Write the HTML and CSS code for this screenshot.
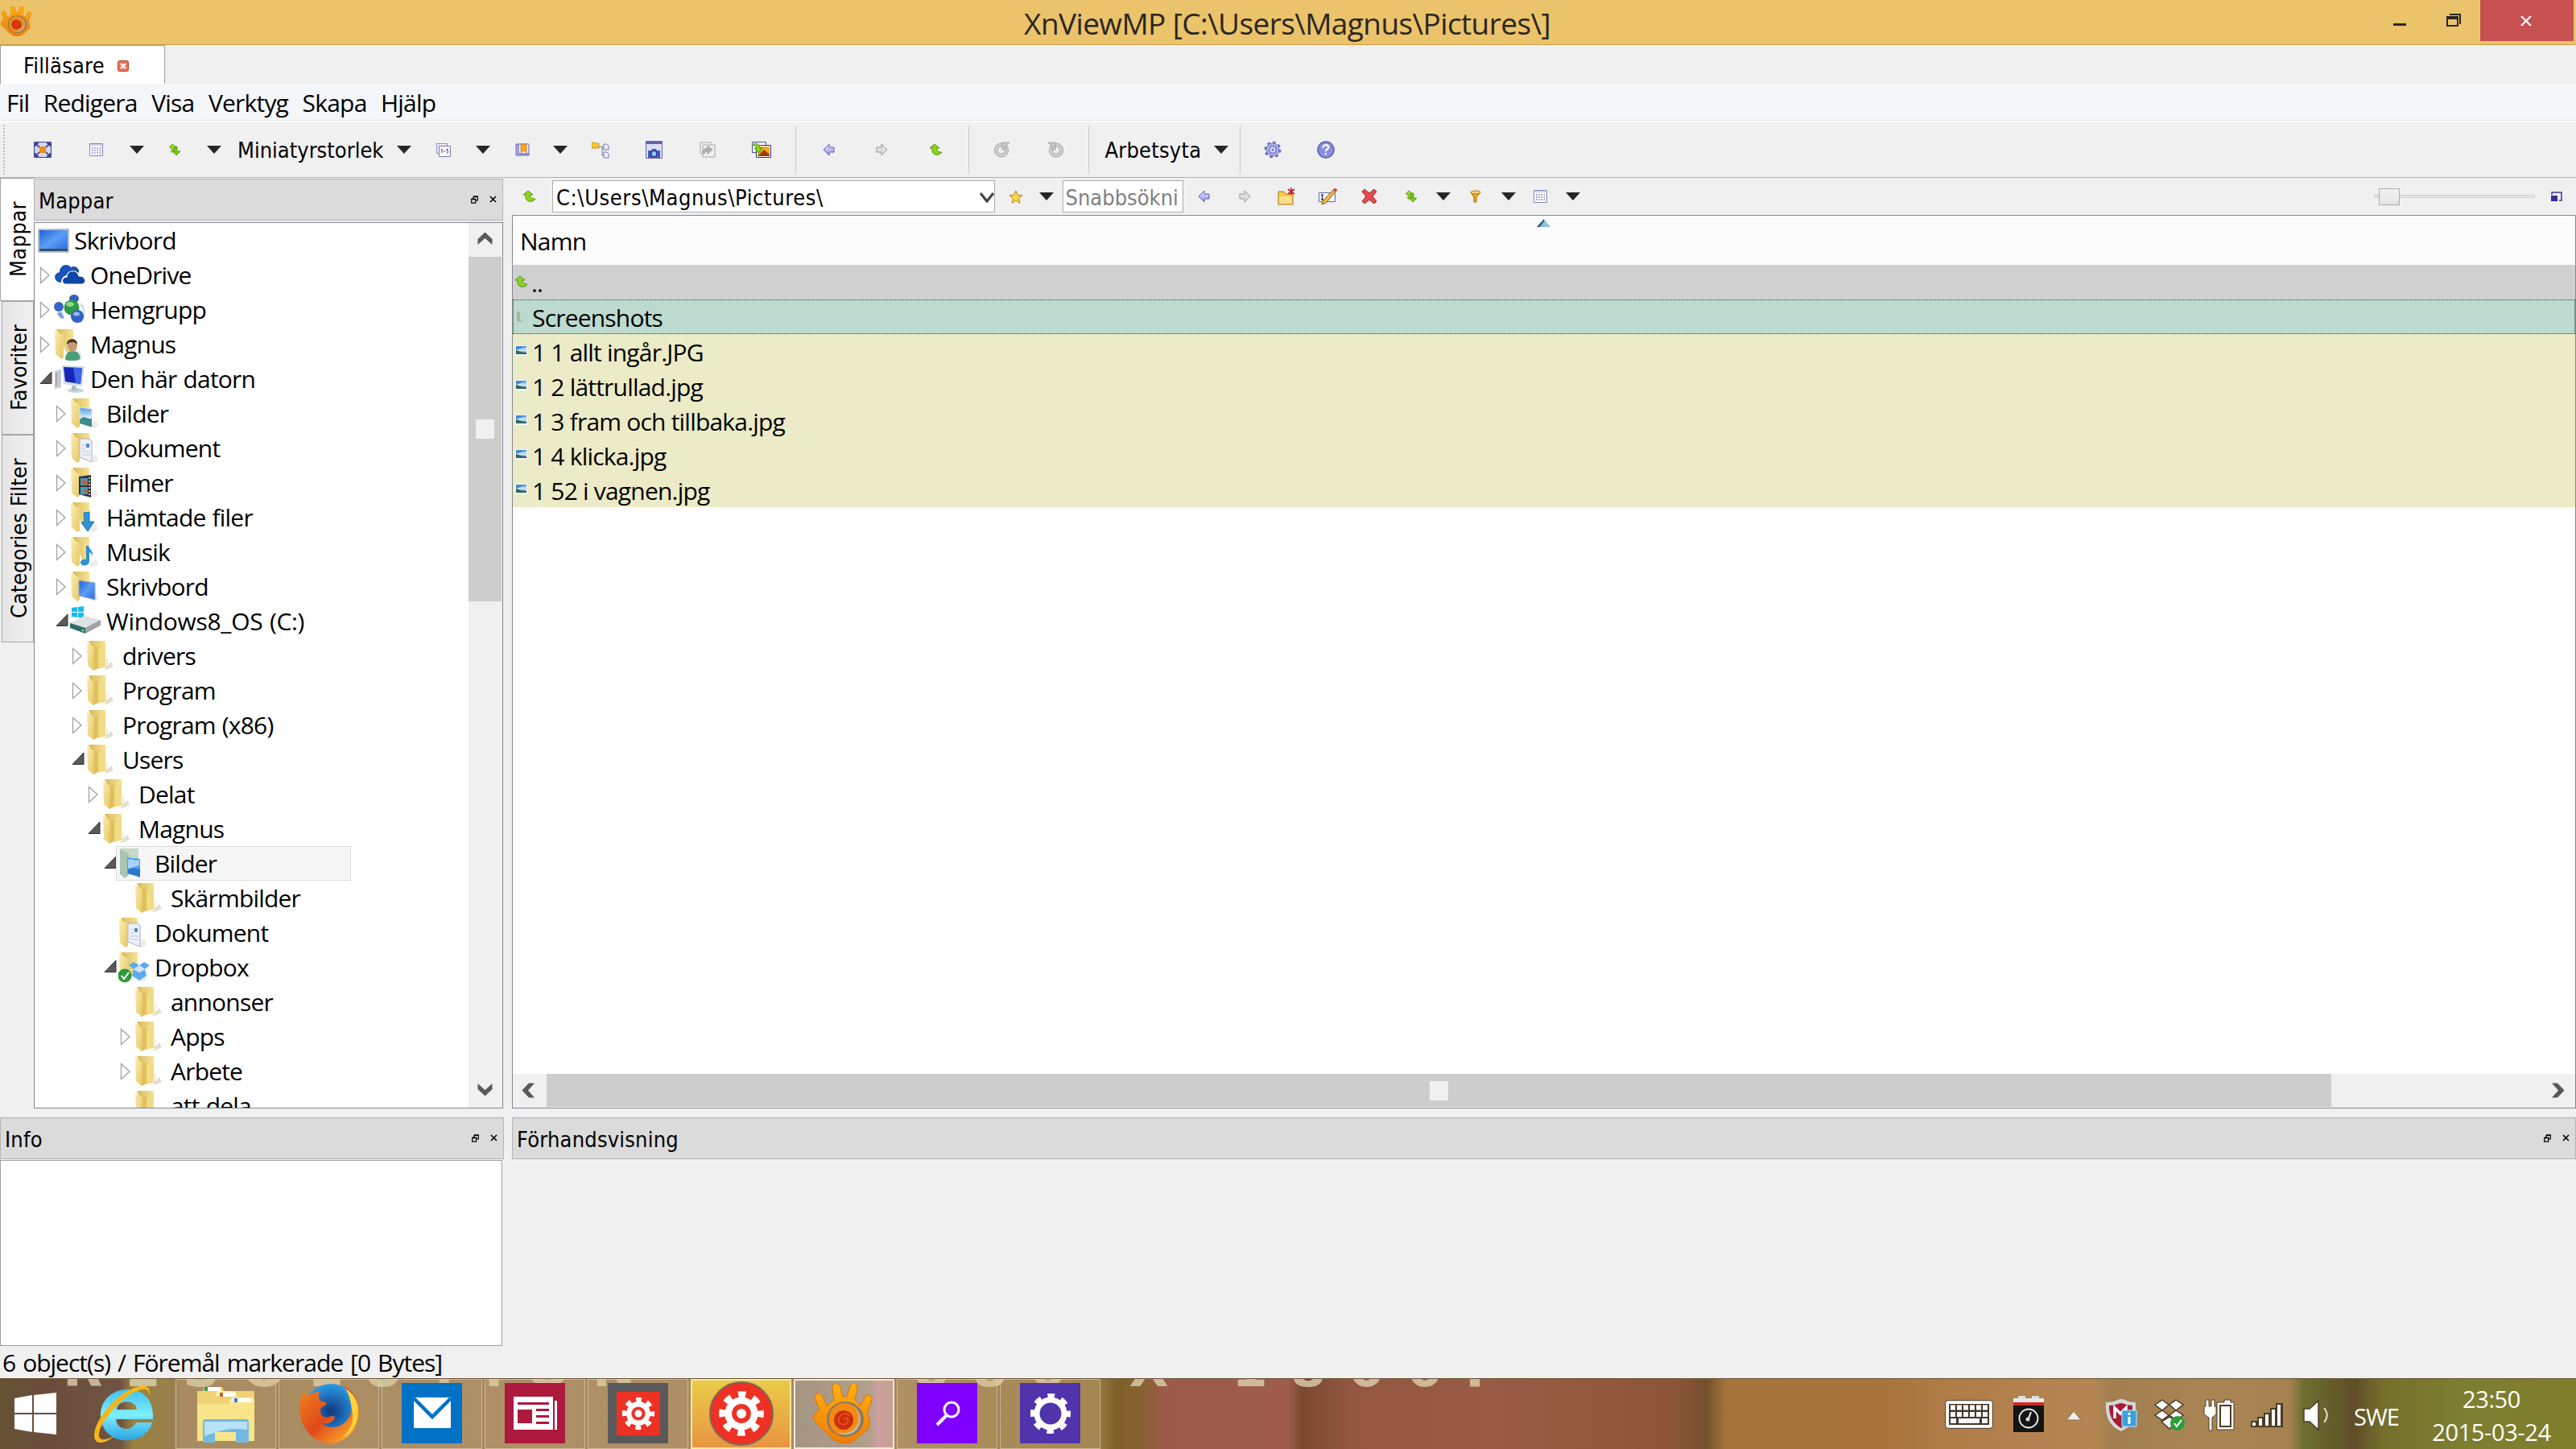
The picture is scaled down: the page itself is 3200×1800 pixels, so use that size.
FILE: index.html
```
<!DOCTYPE html>
<html lang="sv">
<head>
    <meta charset="UTF-8">
    <meta name="viewport" content="width=device-width, initial-scale=1.0">
    <title>XnViewMP</title>
    <link rel="stylesheet" href="styles.css">
</head>
<body>
    <!-- Shared icons -->
    <svg class="sprite" width="0" height="0">
        <defs>
            <linearGradient id="gFolder" x1="0" x2="1" y1="0" y2="1"><stop offset="0" stop-color="#fbeeb0"/><stop offset="1" stop-color="#e6c765"/></linearGradient>
            <linearGradient id="gBack" x1="0" x2="1"><stop offset="0" stop-color="#d8b95c"/><stop offset="1" stop-color="#f7e393"/></linearGradient>
            <linearGradient id="gScreen" x1="0" x2="1" y1="0" y2="1"><stop offset="0" stop-color="#2560d8"/><stop offset=".5" stop-color="#5b9df5"/><stop offset="1" stop-color="#2f6fe0"/></linearGradient>
            <linearGradient id="gBlue" x1="0" x2="0" y1="0" y2="1"><stop offset="0" stop-color="#e4e6ff"/><stop offset="1" stop-color="#9296e0"/></linearGradient>
            <linearGradient id="gSky" x1="0" x2="0" y1="0" y2="1"><stop offset="0" stop-color="#4d9be0"/><stop offset=".5" stop-color="#d5ecf8"/><stop offset="1" stop-color="#3f7d80"/></linearGradient>
            <linearGradient id="gOrange" x1="0" x2="0" y1="0" y2="1"><stop offset="0" stop-color="#ffb010"/><stop offset="1" stop-color="#f07c08"/></linearGradient>
            <linearGradient id="gIe" x1="0" x2="0" y1="0" y2="1"><stop offset="0" stop-color="#3fc0ee"/><stop offset=".5" stop-color="#7fefff"/><stop offset="1" stop-color="#2aa3e0"/></linearGradient>
            <linearGradient id="gFox" x1="0" x2="1" y1="0" y2="1"><stop offset="0" stop-color="#f08a20"/><stop offset=".5" stop-color="#e2481a"/><stop offset="1" stop-color="#ffc830"/></linearGradient>
            <radialGradient id="gGlobe"><stop offset="0" stop-color="#12357e"/><stop offset="1" stop-color="#2b9be6"/></radialGradient>
        </defs>

        <symbol id="i-folder" viewBox="0 0 40 40">
            <path d="M22 37l9-10 3 6-7 3z" fill="#d9d6cc" opacity=".8"/>
            <path d="M3 1h21v26l-8 4z" fill="url(#gBack)"/>
            <path d="M14 12l10-8v20l3-1v10l-13 3z" fill="#f1dc85"/>
            <path d="M1 2l9 8v27l-1 1-7-6z" fill="url(#gFolder)"/>
            <path d="M10 10l5-2v27l-6 3z" fill="#dfc05c"/>
            <path d="M24 23h2.500v9H24z" fill="#fbf6df"/>
        </symbol>
        <symbol id="i-half" viewBox="0 0 40 40">
            <path d="M24 36l8-9 3 8-6 3z" fill="#ddd" opacity=".6"/>
            <path d="M3 1h21v26l-8 4z" fill="url(#gBack)"/>
            <path d="M1 2l11 7v27l-3 2-7-6z" fill="url(#gFolder)"/>
        </symbol>
        <symbol id="i-pictures" viewBox="0 0 40 40">
            <use href="#i-half"/>
            <path d="M12 12l15 2v23l-15-5z" fill="url(#gSky)" stroke="#dfe8ee"/>
            <path d="M12 28c5-8 9 0 15-2v10l-15-4z" fill="#3c8a8f"/>
        </symbol>
        <symbol id="i-pictures-sel" viewBox="0 0 40 40">
            <path d="M3 1h22v26l-8 4z" fill="#c3dac6"/>
            <path d="M2 1l11 7v26l-5 4-6-5z" fill="#a9c5b2"/>
            <path d="M11 12l16 2v23l-16-5z" fill="#4fa0ef"/>
            <path d="M12 15c5-3 9 3 14 0v7l-14 4z" fill="#a8d4fa"/>
            <path d="M12 28c5-6 9 0 15-2v10l-15-4z" fill="#2d78c8"/>
        </symbol>
        <symbol id="i-docs" viewBox="0 0 40 40">
            <use href="#i-half"/>
            <path d="M12 8h12l3 3v26l-15-6z" fill="#eef0f6" stroke="#a9b0c0"/>
            <path d="M15 16h4M15 20h4M15 24h10M15 28h10" stroke="#b8c4d8"/>
            <path d="M20 14h4v5h-4z" fill="#5b8cc6"/>
        </symbol>
        <symbol id="i-film" viewBox="0 0 40 40">
            <use href="#i-half"/>
            <path d="M11 12l15-2v28l-15-4z" fill="#333"/>
            <path d="M13 14h9v9h-9zM13 25h9v9h-9z" fill="#3aa0c8"/>
            <path d="M14 20l4-5 4 6v2zM16 30l4-3 2 6z" fill="#d6502a"/>
            <path d="M24 13v24" stroke="#eee" stroke-width="1.500" stroke-dasharray="2 2"/>
        </symbol>
        <symbol id="i-down" viewBox="0 0 40 40">
            <use href="#i-half"/>
            <path d="M17 14l7-1v12h6l-8 12-8-11 4-1z" fill="#2f95da" stroke="#1d6fb0"/>
        </symbol>
        <symbol id="i-music" viewBox="0 0 40 40">
            <use href="#i-half"/>
            <path d="M20 12h3c0 4 6 5 5 13-1-4-3-4-4-5v11c0 7-11 7-11 2 0-4 4-5 7-4z" fill="#2f8fd2"/>
        </symbol>
        <symbol id="i-deskfold" viewBox="0 0 40 40">
            <use href="#i-half"/>
            <path d="M11 12l20 3v21l-20-5z" fill="url(#gScreen)" stroke="#9aa9bb"/>
        </symbol>
        <symbol id="i-userfold" viewBox="0 0 40 40">
            <use href="#i-half"/>
            <path d="M14 39c0-8 4-11 10-11 5 0 8 3 9 10-6 3-13 3-19 1z" fill="#4aa07a"/>
            <ellipse cx="23" cy="21" rx="6" ry="8" fill="#c79a77"/>
            <path d="M16 20c-1-9 14-9 13 0-3-4-9-4-13 0z" fill="#4b3a2a"/>
        </symbol>
        <symbol id="i-desktop" viewBox="0 0 40 40">
            <path d="M0 5h39v30H0z" fill="#b6c1cc"/>
            <path d="M2 7h35v24H2z" fill="url(#gScreen)"/>
            <path d="M2 30h35v3H2z" fill="#3b4f6b"/>
        </symbol>
        <symbol id="i-cloud" viewBox="0 0 40 40">
            <path d="M9 29c-9 0-11-11-2-13 0-9 10-12 14-6 6-3 11 2 10 7-6-3-10 0-11 3-7-1-11 3-11 9z" fill="#1a52b5"/>
            <path d="M14 31c-5-1-5-9 2-9 0-9 13-10 15-1 8-1 11 9 4 10z" fill="#0c45a8" stroke="#fff" stroke-width="1.200"/>
        </symbol>
        <symbol id="i-homegroup" viewBox="0 0 40 40">
            <path d="M33 12c6 6 5 18 0 24" stroke="#d5e4f4" stroke-width="3" fill="none"/>
            <circle cx="6" cy="16" r="6" fill="#3a62c4"/><path d="M4 24c2 6 6 8 9 6l-4-8z" fill="#7c9de0"/>
            <ellipse cx="25" cy="6" rx="6" ry="5" fill="#3560bf"/>
            <circle cx="22" cy="17" r="9.500" fill="#2f9a46"/><ellipse cx="20" cy="13" rx="5" ry="3" fill="#8fd68f"/>
            <circle cx="29" cy="28" r="8" fill="#3560c4"/><ellipse cx="28" cy="25" rx="4" ry="2.500" fill="#9ab8ee"/>
        </symbol>
        <symbol id="i-computer" viewBox="0 0 40 40">
            <path d="M1 10l8-2v22l-8 2z" fill="#c5cad0"/><path d="M3 12v16" stroke="#888"/>
            <path d="M10 3l28 1-3 25-23-3z" fill="#d4dde6"/>
            <path d="M12 5l23 1-2 20-19-3z" fill="#1526b8"/>
            <path d="M24 6l11 0-2 20-6-1z" fill="#3f63e4"/>
            <ellipse cx="27" cy="34" rx="10" ry="3" fill="#cdd1d6"/><path d="M22 28h5l2 6h-7z" fill="#b5bac0"/>
        </symbol>
        <symbol id="i-drive" viewBox="0 0 40 40">
            <path d="M2 3l7-1v6H2zM10 2l7-1v7h-7zM2 9h7v6l-7-1zM10 9h7v7l-7-1z" fill="#19b9ee"/>
            <path d="M0 22l18-9 20 5-19 10z" fill="#dfe2e4"/>
            <path d="M0 22l19 6v7L0 28z" fill="#2d6a6c"/><path d="M19 28l19-10v7L19 35z" fill="#9da2a6"/>
            <circle cx="16" cy="31" r="1.500" fill="#54f0a0"/>
        </symbol>
        <symbol id="i-dropfold" viewBox="0 0 40 40">
            <use href="#i-half"/>
            <path d="M19 13l7 4-7 5-6-5zM32 13l-6 4 7 5 6-5zM19 22l7 4 7-4 2 8-9 6-9-6z" fill="#5aaaf0"/>
            <path d="M26 17l7 5-7 4-7-4z" fill="#cfe6fb"/>
            <circle cx="8" cy="30" r="8.500" fill="#2c9a38"/><path d="M4 30l3 4 6-8" stroke="#fff" stroke-width="2" fill="none"/>
        </symbol>

        <!-- XnView eye, stretched to the box it is used in -->
        <symbol id="i-eye" viewBox="0 0 78 74" preserveAspectRatio="none">
            <path d="M2 17c0-6 8-7 10-1l5 12c3-3 6-6 9-8L24 5c-1-6 8-7 10-1l3 12h5l4-13c2-6 10-4 9 2l-3 15c3 2 5 4 7 7l5-10c3-6 11-3 9 3l-6 17c4 8 5 14 0 20L52 70c-7 5-19 5-26 0L4 49c-5-7-4-12 4-16z" fill="url(#gOrange)" stroke="#d9720c"/>
            <ellipse cx="40" cy="44" rx="23" ry="22" fill="#8d7a5c"/>
            <ellipse cx="40" cy="44" rx="19" ry="19.500" fill="#c3b79c"/>
            <path d="M20 44c0-24 32-26 36-6 4 18-14 26-24 22 6 8-12 0-12-16z" fill="#f58a12"/>
            <ellipse cx="38" cy="45" rx="12" ry="12" fill="#c8300c"/>
            <path d="M38 45c3-6 8 0 4 4-5 4-12 0-10-6 3-7 10-7 14-3" fill="none" stroke="#ee4a20" stroke-width="2"/>
        </symbol>

        <symbol id="t-full" viewBox="0 0 22 20"><path d="M.5.5h21v19H.5z" fill="#d3d6fb" stroke="#3c3f92"/><path d="M2 2l5 5M20 2l-5 5M2 18l5-5M20 18l-5-5M2 6V2h4M16 2h4v4M2 14v4h4M16 18h4v-4" stroke="#2b2e7c" stroke-width="1.500" fill="none"/><path d="M7 6h8v8H7z" fill="#f0900e"/></symbol>
        <symbol id="t-grid" viewBox="0 0 17 16"><path d="M.5.5h16v15H.5z" fill="#fff" stroke="#8286be"/><path d="M1 1h15v2H1z" fill="#cfd1f2"/><path d="M3 6h11M3 9h11M3 12h11" stroke="#6a6eb4" stroke-width="1.300" stroke-dasharray="1.500 1.700"/></symbol>
        <symbol id="t-sort" viewBox="0 0 16 16"><path d="M1 5l4-4 5 4H7v6H4V5z" fill="#9be01c" stroke="#4a8a08" stroke-width=".8"/><path d="M8 4h3v6h4l-5 5-4-5h2z" fill="#7ccc10" stroke="#4a8a08" stroke-width=".8"/></symbol>
        <symbol id="t-num" viewBox="0 0 18 17"><path d="M.5.5h13v12H.5z" fill="#f6e6e8" stroke="#8c8fd0"/><path d="M3.500 3.500h14v13h-14z" fill="#fff" stroke="#7478c0"/><path d="M6 8l1-1v5M9 10h2M15 7.500h-2v2c3 0 2 3-.5 2.500" stroke="#33378c" fill="none"/></symbol>
        <symbol id="t-book" viewBox="0 0 18 16"><path d="M1 1h3v12h13v2H1z" fill="#b8bbf0" stroke="#6468b8"/><path d="M4 1h13v12H4z" fill="#eef" stroke="#6468b8"/><path d="M7 1h7v11l-3-3-4 3z" fill="#f8a81c" stroke="#b06a08" stroke-width=".6"/></symbol>
        <symbol id="t-tree" viewBox="0 0 22 22"><path d="M0 2h4l1 1h4v6H0z" fill="#fbc62c" stroke="#b07a10" stroke-width=".7"/><path d="M9 7h4v11h3M13 9h3" stroke="#7478b4" fill="none"/><path d="M15 4h4l2 2v5h-6zM15 14h4l2 2v5h-6z" fill="#eef" stroke="#7478b4"/></symbol>
        <symbol id="t-cam" viewBox="0 0 21 22"><path d="M.5.5h20v21H.5z" fill="#dcdefa" stroke="#6468b8"/><path d="M1 1h19v3H1z" fill="#6064b0"/><path d="M3 12h4l1-2h5l1 2h4v9H3z" fill="#4456b8"/><circle cx="10.500" cy="16" r="3.500" fill="#9cc4ff" stroke="#1c2a80"/></symbol>
        <symbol id="t-page" viewBox="0 0 20 20"><path d="M1 1h14v14H1z" fill="#f4f4f4" stroke="#aaa"/><path d="M4 4h15v15H4z" fill="#eee" stroke="#a6a6a6"/><path d="M4 14c0-4 3-6 6-6V5l6 5-6 5v-3c-3 0-4 1-4 3z" fill="#b0b0b0" stroke="#888" stroke-width=".6"/></symbol>
        <symbol id="t-pics" viewBox="0 0 24 20"><path d="M.5.5h17v13H.5z" fill="#fff" stroke="#45499c"/><path d="M5.500 4.500h18v15h-18z" fill="#fff" stroke="#33337c"/><path d="M7 6h15v12H7z" fill="#f6a81c"/><path d="M7 18l8-8 7 6v2z" fill="#9b3e10"/><path d="M2 3c4-2 8 1 8 5h3l-5 6-5-6h3c0-2-2-3-4-3z" fill="#8ed41a" stroke="#4a8a08" stroke-width=".8"/></symbol>
        <symbol id="t-back" viewBox="0 0 15 16"><path d="M1 8l7-7v4h6v6H8v4z" fill="url(#gBlue)" stroke="#5a5eb8"/></symbol>
        <symbol id="t-fwd" viewBox="0 0 15 16"><path d="M14 8L7 1v4H1v6h6v4z" fill="#dedede" stroke="#999"/></symbol>
        <symbol id="t-up" viewBox="0 0 17 16"><path d="M1 6l6-5 6 5h-3c-1 4 2 5 6 5-3 5-11 4-12-1V6z" fill="#8fd41a" stroke="#4a8a08" stroke-width=".9"/></symbol>
        <symbol id="t-rotl" viewBox="0 0 21 20"><circle cx="10" cy="10.500" r="6.500" fill="none" stroke="#999" stroke-width="5"/><circle cx="10" cy="10.500" r="6.500" fill="none" stroke="#cfcfcf" stroke-width="3.400"/><path d="M11 1h9l-5 5v4h-4z" fill="#c8c8c8" stroke="#999" stroke-width=".8"/></symbol>
        <symbol id="t-rotr" viewBox="0 0 21 20"><circle cx="11" cy="10.500" r="6.500" fill="none" stroke="#999" stroke-width="5"/><circle cx="11" cy="10.500" r="6.500" fill="none" stroke="#cfcfcf" stroke-width="3.400"/><path d="M10 1H1l5 5v4h4z" fill="#c8c8c8" stroke="#999" stroke-width=".8"/></symbol>
        <symbol id="t-gear" viewBox="0 0 22 22"><circle cx="11" cy="11" r="9" fill="none" stroke="#6a6fc0" stroke-width="3" stroke-dasharray="3.530"/><circle cx="11" cy="11" r="8" fill="#aeb6ec" stroke="#6a70c4"/><circle cx="11" cy="11" r="4.500" fill="#d4d8fa" stroke="#6a70c4" stroke-width="1.500"/><circle cx="11" cy="11" r="1.500" fill="#6a70c4"/></symbol>
        <symbol id="t-help" viewBox="0 0 22 22"><circle cx="11" cy="11" r="10" fill="#8a90e0" stroke="#5a5eb0" stroke-width="1.500"/><path d="M7.500 8.500c0-5 7.500-4 7-0.500-.3 2.500-3.500 2-3.500 5M11 15v2" stroke="#fff" stroke-width="2.200" fill="none"/></symbol>
        <symbol id="t-star" viewBox="0 0 18 17"><path d="M9 1l2.300 5.200 5.700.6-4.300 3.800 1.300 5.600L9 13.300l-5 2.900 1.300-5.600L1 6.800l5.700-.6z" fill="#ffd84a" stroke="#c07a10"/></symbol>
        <symbol id="t-new" viewBox="0 0 22 22"><path d="M1 5h7l2 3h9v13H1z" fill="#fbc94a" stroke="#a87818"/><path d="M2 11h16v9H2z" fill="#ffe08a"/><path d="M17 0v9M13 2l8 6M21 2l-8 6" stroke="#c81c1c" stroke-width="1.600"/></symbol>
        <symbol id="t-ren" viewBox="0 0 24 22"><path d="M.5 6.500h20v11H.5z" fill="#f4f6ff" stroke="#5a6ab8"/><path d="M3 9h3M3 15h3M4.500 9v6" stroke="#000"/><path d="M20 1l3 2L9 19l-5 2 1-4z" fill="#f0b848" stroke="#8a5a18"/><path d="M20 1l3 2-2 3-3-3z" fill="#d05050"/></symbol>
        <symbol id="t-del" viewBox="0 0 20 20"><path d="M4 1l6 5 6-5 3 3-5 6 5 6-3 3-6-5-6 5-3-3 5-6-5-6z" fill="#e04e4e" stroke="#a82020"/></symbol>
        <symbol id="t-filter" viewBox="0 0 14 16"><path d="M1 3l4 6v6h3V9l5-6z" fill="#f8a81c" stroke="#b06a08"/><ellipse cx="7" cy="3" rx="6" ry="2" fill="#ffdc70" stroke="#b06a08"/></symbol>
        <symbol id="t-pic" viewBox="0 0 15 13"><path d="M0 0h15v13H0z" fill="#f4f7f8"/><path d="M1 1h13v10H1z" fill="url(#gSky)"/><path d="M1 1h13L1 6z" fill="#3f8ad8"/><path d="M1 6c4 1 9 3 13 3v2H1z" fill="#2f6462"/></symbol>
        <symbol id="t-float" viewBox="0 0 9 10"><path d="M3 .8h5.300V6H6M.7 4.200h5v5h-5zM3 1v3M.7 4.700h5M3 1.300h5" fill="none" stroke="#000" stroke-width="1.200"/></symbol>
        <symbol id="t-x" viewBox="0 0 9 9"><path d="M1 1l7 7M8 1L1 8" stroke="#000" stroke-width="1.600"/></symbol>
        <symbol id="a-closed" viewBox="0 0 14 22"><path d="M1.500 1.500v19L12 11z" fill="#fff" stroke="#a6a6a6" stroke-width="1.400"/></symbol>
        <symbol id="a-open" viewBox="0 0 16 16"><path d="M1 15.500L15 1v14.500z" fill="#595959" stroke="#333"/></symbol>
        <symbol id="gear8" viewBox="0 0 100 100">
            <circle cx="50" cy="50" r="38" fill="none" stroke="#fff" stroke-width="20" stroke-dasharray="14.920" stroke-dashoffset="7.460"/>
            <circle cx="50" cy="50" r="28" fill="none" stroke="#fff" stroke-width="15"/>
        </symbol>
    </svg>

    <header class="titlebar">
        <svg class="app-icon"><use href="#i-eye"/></svg>
        <div class="title">XnViewMP [C:\Users\Magnus\Pictures\]</div>
        <div class="win-buttons">
            <svg width="16" height="3"><path d="M0 0h16v3H0z" fill="#2b2620"/></svg>
            <svg class="restore" width="18" height="16" viewBox="0 0 18 16"><path d="M4 1h13v12M3 1" fill="none" stroke="#2b2620" stroke-width="2"/><path d="M1 4h13v11H1z" fill="none" stroke="#2b2620" stroke-width="2"/><path d="M1 3h14v4H1z" fill="#2b2620"/></svg>
            <div class="win-close"><svg width="14" height="12" viewBox="0 0 14 12"><path d="M1 0l12 12M13 0L1 12" stroke="#fff" stroke-width="2.200"/></svg></div>
        </div>
    </header>

    <div class="doc-tabs">
        <div class="doc-tab ui">Filläsare <svg width="14" height="14" viewBox="0 0 14 14"><rect x=".5" y=".5" width="13" height="13" rx="2" fill="#e2745a" stroke="#b8452e"/><path d="M4 4l6 6M10 4l-6 6" stroke="#fff" stroke-width="2.200"/></svg></div>
    </div>

    <nav class="menu">
        <span>Fil</span><span>Redigera</span><span>Visa</span><span>Verktyg</span><span>Skapa</span><span>Hjälp</span>
    </nav>

    <div class="toolbar ui">
        <div class="tool"><svg width="22" height="20"><use href="#t-full"/></svg></div>
        <div class="tool"><svg width="17" height="16"><use href="#t-grid"/></svg></div>
        <i class="drop narrow"></i>
        <div class="tool pair"><svg width="16" height="16"><use href="#t-sort"/></svg></div>
        <i class="drop"></i>
        <div class="tool-label thumb-size">Miniatyrstorlek</div>
        <i class="drop"></i>
        <div class="tool pair"><svg width="18" height="17"><use href="#t-num"/></svg></div>
        <i class="drop"></i>
        <div class="tool pair"><svg width="18" height="16"><use href="#t-book"/></svg></div>
        <i class="drop narrow"></i>
        <div class="tool"><svg width="22" height="22"><use href="#t-tree"/></svg></div>
        <div class="tool"><svg width="21" height="22"><use href="#t-cam"/></svg></div>
        <div class="tool"><svg width="20" height="20"><use href="#t-page"/></svg></div>
        <div class="tool"><svg width="24" height="20"><use href="#t-pics"/></svg></div>
        <b class="sep first"></b>
        <div class="tool"><svg width="15" height="16"><use href="#t-back"/></svg></div>
        <div class="tool"><svg width="15" height="16"><use href="#t-fwd"/></svg></div>
        <div class="tool"><svg width="17" height="16"><use href="#t-up"/></svg></div>
        <b class="sep mid"></b>
        <div class="tool"><svg width="21" height="20"><use href="#t-rotl"/></svg></div>
        <div class="tool"><svg width="21" height="20"><use href="#t-rotr"/></svg></div>
        <b class="sep mid"></b>
        <div class="tool-label workspace">Arbetsyta</div>
        <i class="drop"></i>
        <b class="sep last"></b>
        <div class="tool"><svg width="22" height="22"><use href="#t-gear"/></svg></div>
        <div class="tool"><svg width="22" height="22"><use href="#t-help"/></svg></div>
    </div>

    <main class="workspace-area">
        <div class="side-tabs ui">
            <div class="side-tab active">Mappar</div>
            <div class="side-tab fav">Favoriter</div>
            <div class="side-tab cat">Categories Filter</div>
        </div>

        <section class="folders">
            <div class="dock-title ui">Mappar<span class="dock-icons"><svg width="9" height="10"><use href="#t-float"/></svg><svg width="9" height="9"><use href="#t-x"/></svg></span></div>
            <div class="tree-box">
                <div class="tree">
                    <div class="node l0"><svg class="ico"><use href="#i-desktop"/></svg>Skrivbord</div>
                    <div class="node l1"><svg class="arr"><use href="#a-closed"/></svg><svg class="ico"><use href="#i-cloud"/></svg>OneDrive</div>
                    <div class="node l1"><svg class="arr"><use href="#a-closed"/></svg><svg class="ico"><use href="#i-homegroup"/></svg>Hemgrupp</div>
                    <div class="node l1"><svg class="arr"><use href="#a-closed"/></svg><svg class="ico"><use href="#i-userfold"/></svg>Magnus</div>
                    <div class="node l1"><svg class="arr open"><use href="#a-open"/></svg><svg class="ico"><use href="#i-computer"/></svg>Den här datorn</div>
                    <div class="node l2"><svg class="arr"><use href="#a-closed"/></svg><svg class="ico"><use href="#i-pictures"/></svg>Bilder</div>
                    <div class="node l2"><svg class="arr"><use href="#a-closed"/></svg><svg class="ico"><use href="#i-docs"/></svg>Dokument</div>
                    <div class="node l2"><svg class="arr"><use href="#a-closed"/></svg><svg class="ico"><use href="#i-film"/></svg>Filmer</div>
                    <div class="node l2"><svg class="arr"><use href="#a-closed"/></svg><svg class="ico"><use href="#i-down"/></svg>Hämtade filer</div>
                    <div class="node l2"><svg class="arr"><use href="#a-closed"/></svg><svg class="ico"><use href="#i-music"/></svg>Musik</div>
                    <div class="node l2"><svg class="arr"><use href="#a-closed"/></svg><svg class="ico"><use href="#i-deskfold"/></svg>Skrivbord</div>
                    <div class="node l2 drive"><svg class="arr open"><use href="#a-open"/></svg><svg class="ico"><use href="#i-drive"/></svg>Windows8_OS (C:)</div>
                    <div class="node l3"><svg class="arr"><use href="#a-closed"/></svg><svg class="ico"><use href="#i-folder"/></svg>drivers</div>
                    <div class="node l3"><svg class="arr"><use href="#a-closed"/></svg><svg class="ico"><use href="#i-folder"/></svg>Program</div>
                    <div class="node l3"><svg class="arr"><use href="#a-closed"/></svg><svg class="ico"><use href="#i-folder"/></svg>Program (x86)</div>
                    <div class="node l3"><svg class="arr open"><use href="#a-open"/></svg><svg class="ico"><use href="#i-folder"/></svg>Users</div>
                    <div class="node l4"><svg class="arr"><use href="#a-closed"/></svg><svg class="ico"><use href="#i-folder"/></svg>Delat</div>
                    <div class="node l4"><svg class="arr open"><use href="#a-open"/></svg><svg class="ico"><use href="#i-folder"/></svg>Magnus</div>
                    <div class="node l5"><svg class="arr open"><use href="#a-open"/></svg><div class="selected"><svg class="ico"><use href="#i-pictures-sel"/></svg>Bilder</div></div>
                    <div class="node l6"><svg class="ico"><use href="#i-folder"/></svg>Skärmbilder</div>
                    <div class="node l5"><svg class="ico"><use href="#i-docs"/></svg>Dokument</div>
                    <div class="node l5"><svg class="arr open"><use href="#a-open"/></svg><svg class="ico"><use href="#i-dropfold"/></svg>Dropbox</div>
                    <div class="node l6"><svg class="ico"><use href="#i-folder"/></svg>annonser</div>
                    <div class="node l6"><svg class="arr"><use href="#a-closed"/></svg><svg class="ico"><use href="#i-folder"/></svg>Apps</div>
                    <div class="node l6"><svg class="arr"><use href="#a-closed"/></svg><svg class="ico"><use href="#i-folder"/></svg>Arbete</div>
                    <div class="node l6"><svg class="ico"><use href="#i-folder"/></svg>att dela</div>
                </div>
                <div class="vscroll">
                    <div class="vbtn"><svg width="19" height="17" viewBox="0 0 19 17"><path d="M.5 16V9l9-8.500 9 8.500v7l-9-8z" fill="#595959"/></svg></div>
                    <div class="vthumb"><b></b></div>
                    <div class="vbtn end"><svg width="19" height="17" viewBox="0 0 19 17"><path d="M.5 1v7l9 8.500L18.500 8V1l-9 8z" fill="#595959"/></svg></div>
                </div>
            </div>
        </section>

        <section class="browser">
            <div class="address ui">
                <div class="tool go-up"><svg width="17" height="16"><use href="#t-up"/></svg></div>
                <div class="path">C:\Users\Magnus\Pictures\ <svg width="18" height="14" viewBox="0 0 18 14"><path d="M1 2l8 10 8-10" fill="none" stroke="#444" stroke-width="3.200"/></svg></div>
                <div class="tool"><svg width="18" height="17"><use href="#t-star"/></svg></div>
                <i class="drop tight"></i>
                <div class="search">Snabbsökni</div>
                <div class="tool"><svg width="15" height="16"><use href="#t-back"/></svg></div>
                <div class="tool"><svg width="15" height="16"><use href="#t-fwd"/></svg></div>
                <div class="tool"><svg width="22" height="22"><use href="#t-new"/></svg></div>
                <div class="tool"><svg width="24" height="22"><use href="#t-ren"/></svg></div>
                <div class="tool"><svg width="20" height="20"><use href="#t-del"/></svg></div>
                <div class="tool"><svg width="16" height="16"><use href="#t-sort"/></svg></div>
                <i class="drop"></i>
                <div class="tool"><svg width="14" height="16"><use href="#t-filter"/></svg></div>
                <i class="drop"></i>
                <div class="tool"><svg width="17" height="16"><use href="#t-grid"/></svg></div>
                <i class="drop"></i>
                <div class="slider"><b></b></div>
                <svg class="corner" width="14" height="12" viewBox="0 0 14 12"><path d="M1 4V1h12v10h-3" fill="none" stroke="#3a3494" stroke-width="1.500"/><path d="M0 5h8v7H0z" fill="#322c98"/></svg>
            </div>
            <div class="list">
                <div class="list-head">Namn<svg class="sort-mark" width="17" height="10" viewBox="0 0 17 10"><path d="M0 10L9 0l8 10z" fill="#8cc4de"/><path d="M0 10L9 0v3L4 10z" fill="#3c5e72"/></svg></div>
                <div class="row parent"><svg width="17" height="16"><use href="#t-up"/></svg>..</div>
                <div class="row focus"><svg width="15" height="16" viewBox="0 0 15 16"><path d="M2 1l4 2v9l4 2-6 1-2-2z" fill="#9fb99a"/></svg>Screenshots</div>
                <div class="row"><svg width="15" height="13"><use href="#t-pic"/></svg>1 1 allt ingår.JPG</div>
                <div class="row"><svg width="15" height="13"><use href="#t-pic"/></svg>1 2 lättrullad.jpg</div>
                <div class="row"><svg width="15" height="13"><use href="#t-pic"/></svg>1 3 fram och tillbaka.jpg</div>
                <div class="row"><svg width="15" height="13"><use href="#t-pic"/></svg>1 4 klicka.jpg</div>
                <div class="row"><svg width="15" height="13"><use href="#t-pic"/></svg>1 52 i vagnen.jpg</div>
                <div class="hscroll">
                    <div class="hbtn"><svg width="17" height="19" viewBox="0 0 17 19"><path d="M16 .5H9L.5 9.500 9 18.500h7l-8-9z" fill="#595959"/></svg></div>
                    <div class="hthumb"><b></b></div>
                    <div class="hbtn end"><svg width="17" height="19" viewBox="0 0 17 19"><path d="M1 .5h7l8.500 9-8.500 9H1l8-9z" fill="#595959"/></svg></div>
                </div>
            </div>
        </section>
    </main>

    <div class="lower">
        <section class="info">
            <div class="dock-title ui">Info<span class="dock-icons"><svg width="9" height="10"><use href="#t-float"/></svg><svg width="9" height="9"><use href="#t-x"/></svg></span></div>
            <div class="info-box"></div>
        </section>
        <section class="preview">
            <div class="dock-title ui">Förhandsvisning<span class="dock-icons"><svg width="9" height="10"><use href="#t-float"/></svg><svg width="9" height="9"><use href="#t-x"/></svg></span></div>
        </section>
    </div>

    <div class="status"><span>6 object(s) / Föremål markerade [0 Bytes]</span></div>

    <footer class="taskbar">
        <div class="wallpaper-text">RESOLUTION AT 2880 X 1800P</div>
        <div class="start"><svg width="52" height="52" viewBox="0 0 52 52"><path d="M0 7l22-4v22H0zM24 3l28-3v25H24zM0 27h22v22L0 45zM24 27h28v25l-28-3z" fill="#fff"/></svg></div>
        <div class="task plain"><svg width="76" height="74" viewBox="0 0 76 74">
            <path d="M75 44H29c1 14 20 16 25 4h20C67 78 12 80 10 40 9 4 58-4 71 22c4 8 4 15 4 22zM30 32h25c-1-13-24-13-25 0z" fill="url(#gIe)"/>
            <path d="M70 17C75-2 58 0 40 11 14 28-2 58 3 69c3 8 16 3 24-4-10 5-18 6-19 0C6 54 26 27 46 14 60 5 72 3 70 17z" fill="#f7b51c"/></svg></div>
        <div class="task"><svg width="72" height="72" viewBox="0 0 72 72">
            <path d="M0 8h7l2-5h22l2 5h38v62H0z" fill="#eed274"/><path d="M0 24h38l4-4h29v50H0z" fill="#f8e58a"/><path d="M22 14l3-6h22l3 6zM40 22l3-6h26l2 6z" fill="#fbf0b8"/>
            <path d="M11 3h18v5H11zM31 10h17v5H31zM48 17h18v5H48z" fill="#fff"/><path d="M9 3h4v5H9z" fill="#3a9a48"/><path d="M28 10h4v5h-4z" fill="#c65a28"/><path d="M46 17h4v5h-4z" fill="#3a80c8"/>
            <path d="M7 72V46c0-2 1-3 3-3h51c2 0 3 1 3 3v26H48V59H22v13z" fill="#74b9e2"/><path d="M9 46h53v10c-22-3-34 1-53 8z" fill="#b9e2f7"/></svg></div>
        <div class="task"><svg width="76" height="74" viewBox="0 0 76 74">
            <circle cx="40" cy="34" r="34" fill="url(#gGlobe)"/>
            <path d="M4 12c2-1 5 0 7 3 5-3 9-5 16-5-3 4-3 8 1 12 4 0 8 1 6 4-3 2-7 3-7 7 0 9 7 10 14 7 4-1 5 3 2 5-5 6-13 5-16 2 12 14 36 7 39-16 2-14-4-25-14-30 15 5 24 20 23 37-2 22-18 36-37 36C12 72-6 44 4 12z" fill="url(#gFox)"/>
            <path d="M58 6c14 8 18 22 15 36-3 14-11 22-20 26 11-9 17-22 13-36-1-9-3-18-8-26z" fill="#ffd23c"/></svg></div>
        <div class="task"><svg width="75" height="75" viewBox="0 0 75 75"><path d="M0 0h75v75H0z" fill="#0072c6"/><path d="M15 18h46v38H15z" fill="#fff"/><path d="M15 19l23 23 23-23" fill="none" stroke="#0072c6" stroke-width="4.500"/></svg></div>
        <div class="task"><svg width="75" height="75" viewBox="0 0 75 75"><path d="M0 0h75v75H0z" fill="#ac193d"/><path d="M11 17h49v41H11zM62 22h3v36h-3z" fill="#fff"/><path d="M16 24h39v3H16zM16 33h18v17H16zM39 32h16v3H39zM39 40h16v3H39zM39 48h16v3H39z" fill="#ac193d"/></svg></div>
        <div class="task"><svg width="75" height="75" viewBox="0 0 75 75"><path d="M0 0h75v75H0z" fill="#595959"/><path d="M11 11h54v54H11z" fill="#ef3124"/><use href="#gear8" x="17" y="17" width="42" height="42"/><circle cx="38" cy="38" r="4.500" fill="#fff"/></svg></div>
        <div class="task active"><svg width="80" height="80" viewBox="0 0 80 80"><circle cx="40" cy="40" r="39" fill="#ef3124" stroke="#7d6a5a" stroke-width="2"/><use href="#gear8" x="11" y="11" width="58" height="58"/><circle cx="40" cy="40" r="6" fill="#fff"/></svg></div>
        <div class="task window"><svg width="78" height="74"><use href="#i-eye"/></svg></div>
        <div class="task"><svg width="75" height="75" viewBox="0 0 75 75"><path d="M0 0h75v75H0z" fill="#7f00ff"/><circle cx="43" cy="33" r="9" fill="none" stroke="#fff" stroke-width="3"/><path d="M37 40L25 52" stroke="#fff" stroke-width="4"/></svg></div>
        <div class="task"><svg width="75" height="75" viewBox="0 0 75 75"><path d="M0 0h75v75H0z" fill="#5133ab"/><circle cx="38" cy="38" r="20.500" fill="none" stroke="#fff" stroke-width="9" stroke-dasharray="8.050" stroke-dashoffset="4"/><circle cx="38" cy="38" r="17" fill="none" stroke="#fff" stroke-width="7"/></svg></div>

        <div class="tray">
            <svg class="kbd" width="60" height="36" viewBox="0 0 60 36"><rect x=".7" y=".7" width="58.600" height="34.600" rx="3" fill="#fff" stroke="#44382a"/><path d="M5 5h50v26H5z" fill="#44382a"/><path d="M7 9.500h46M7 18h46" stroke="#fff" stroke-width="6" stroke-dasharray="6 2"/><path d="M7 23h7v6H7zM17 23h26v6H17zM46 23h7v6h-7z" fill="#fff"/></svg>
            <svg class="batt" width="40" height="46" viewBox="0 0 40 46"><path d="M7 0h9v4H7zM24 0h9v4h-9z" fill="#ddd"/><path d="M1 3h38v42H1z" fill="#141414"/><path d="M1 3h38v5H1z" fill="#e8e8e8"/><path d="M1 8h38v4H1z" fill="#d02a24"/><circle cx="20" cy="28" r="11.500" fill="none" stroke="#eee" stroke-width="1.800"/><path d="M20 28l3-8" stroke="#fff" stroke-width="2"/><circle cx="19" cy="29" r="2.500" fill="#ddd"/></svg>
            <svg class="more" width="20" height="13" viewBox="0 0 20 13"><path d="M1 12l9-11 9 11z" fill="#eee" stroke="#8a7350"/></svg>
            <svg class="shield" width="40" height="40" viewBox="0 0 40 40"><path d="M1 4C13 4 15 0 20 0s8 4 18 4c1 20-5 30-18 36C7 34 0 24 1 4z" fill="#d4d6d8"/><path d="M5 8c9 0 11-3 15-3s6 3 14 3c0 14-4 22-14 28C10 30 5 22 5 8z" fill="#a51c34"/><path d="M12 24V11l7 7 7-7v13" fill="none" stroke="#fff" stroke-width="3.500"/><path d="M21 14h18v20H21z" fill="#3aa0dc" stroke="#bfe4f8"/><path d="M30 17v3M30 22v9" stroke="#fff" stroke-width="3"/></svg>
            <svg class="dbx" width="40" height="40" viewBox="0 0 40 40"><path d="M11 1l8 6-8 7-9-7zM28 1l9 6-9 7-8-7zM11 14l8 6-8 6-9-6zM28 14l9 6-9 6-8-6zM10 28l10-6 9 6-9 9z" fill="#fff" stroke="#4c3b24" stroke-width="1.500"/><circle cx="30" cy="30" r="9" fill="#27a03a"/><path d="M26 30l3 4 6-8" fill="none" stroke="#fff" stroke-width="2"/></svg>
            <svg class="power" width="40" height="40" viewBox="0 0 40 40"><path d="M3 1h4v8h3V1h4v8h2v10l-5 4v16H7V23l-6-4V9h2z" fill="#fff" stroke="#4c3b24"/><path d="M22 4h4V1h8v3h4v34H17V4z" fill="#fff" stroke="#4c3b24"/><path d="M21 8h13v26H21z" fill="#fff" stroke="#4c3b24" stroke-width="2"/></svg>
            <svg class="signal" width="40" height="30" viewBox="0 0 40 30"><path d="M0 22h8v-5h8v-5h8V6h7V0h9v30H0z" fill="#4c3b24"/><path d="M2 24h4v4H2zM10 19h4v9h-4zM18 14h4v14h-4zM26 8h4v20h-4zM33 2h4v26h-4z" fill="#fff"/></svg>
            <svg class="sound" width="34" height="38" viewBox="0 0 34 38"><path d="M1 11h7L19 1v36L8 27H1z" fill="#fff" stroke="#4c3b24" stroke-width="1.500"/><path d="M26 10c5 6 5 12 0 18" fill="none" stroke="#efe6d4" stroke-width="1.800"/></svg>
            <div class="lang">SWE</div>
            <div class="clock"><div>23:50</div><div>2015-03-24</div></div>
        </div>
    </footer>
</body>
</html>
```
FILE: styles.css
```
* {
    box-sizing: border-box;
}

body {
    margin: 0;
    width: 3200px;
    height: 1800px;
    overflow: hidden;
    display: flex;
    flex-direction: column;
    background: #f0f0f0;
    color: #000;
    font-family: "Open Sans", "Noto Sans", sans-serif;
    font-size: 30px;
    letter-spacing: -0.8px;
    white-space: nowrap;
}

svg {
    display: block;
    flex-shrink: 0;
}

.sprite {
    position: absolute;
}

.ui {
    font-family: "DejaVu Sans Condensed", "DejaVu Sans", sans-serif;
    font-stretch: condensed;
    font-size: 27px;
    letter-spacing: 0;
}

/* Title bar */
.titlebar {
    height: 56px;
    flex-shrink: 0;
    display: flex;
    align-items: flex-start;
    background: #ebc36a;
    border-bottom: 1px solid #c9a04a;
}

.app-icon {
    width: 40px;
    height: 37px;
    margin: 8px 0 0 1px;
}

.title {
    flex: 1;
    padding-left: 184px;
    text-align: center;
    font-size: 37px;
    line-height: 58px;
    letter-spacing: -0.6px;
    color: #2b2620;
}

.win-buttons {
    display: flex;
    height: 51px;
    padding-right: 3px;
}

.win-buttons > svg {
    margin: 29px 50px 0 0;
}

.win-buttons > .restore {
    margin: 17px 24px 0 0;
}

.win-close {
    width: 116px;
    background: #c75050;
    display: flex;
    align-items: center;
    justify-content: center;
    padding-right: 2px;
}

/* Document tabs and menu */
.doc-tabs {
    height: 48px;
    flex-shrink: 0;
    display: flex;
}

.doc-tab {
    width: 205px;
    padding: 2px 0 0 28px;
    display: flex;
    align-items: center;
    gap: 16px;
    background: #fff;
    border: 1px solid #a0a0a0;
    border-bottom: none;
    letter-spacing: 0.2px;
}

.menu {
    height: 48px;
    flex-shrink: 0;
    display: flex;
    gap: 17.500px;
    padding-left: 8px;
    line-height: 47px;
    background: #f4f7fa;
    border-bottom: 2px solid #fff;
    box-shadow: inset 0 -1px #e2e5e8;
}

/* Toolbar */
.toolbar {
    height: 69px;
    flex-shrink: 0;
    display: flex;
    align-items: center;
    padding-left: 20px;
    border-bottom: 1px solid #b0b0b0;
    background: repeating-linear-gradient(#bbb 0 2px, #f0f0f0 2px 4px) 4px 3px / 2px 62px no-repeat;
}

.tool {
    width: 66.500px;
    display: flex;
    justify-content: center;
    flex-shrink: 0;
}

.tool.pair {
    width: 60px;
}

.drop {
    width: 38px;
    display: flex;
    justify-content: center;
    flex-shrink: 0;
}

.drop.narrow {
    width: 34px;
}

.drop::before {
    content: "";
    border: 9.500px solid transparent;
    border-top: 10px solid #262626;
    border-bottom: 0;
}

.tool-label {
    padding-left: 10px;
}

.thumb-size {
    width: 198px;
}

.workspace {
    width: 137px;
    padding-left: 12px;
    letter-spacing: 0.2px;
}

.sep {
    width: 1px;
    height: 60px;
    margin: 0 7px;
    background: #c8c8c8;
}

.sep.first {
    margin-left: 9px;
}

.sep.mid {
    margin-right: 8px;
}

.sep.last {
    margin: 0 7px 0 4px;
}

/* Main area */
.workspace-area {
    height: 1156px;
    flex-shrink: 0;
    display: flex;
}

.side-tabs {
    width: 42px;
    display: flex;
    flex-direction: column;
    align-items: flex-end;
}

.side-tab {
    width: 40px;
    writing-mode: vertical-rl;
    transform: rotate(180deg);
    display: flex;
    align-items: center;
    justify-content: center;
    padding-right: 2px;
    background: linear-gradient(to left, #e6e6e6, #f0f0f0);
    border: 1px solid #a5a5a5;
}

.side-tab.active {
    width: 42px;
    height: 153px;
    background: #fff;
    border-left: none;
    letter-spacing: 0.4px;
}

.side-tab.fav {
    height: 166px;
}

.side-tab.cat {
    height: 258px;
}

.folders {
    width: 583px;
    display: flex;
    flex-direction: column;
    gap: 2px;
    padding-top: 1px;
}

.dock-title {
    height: 52px;
    flex-shrink: 0;
    display: flex;
    align-items: center;
    justify-content: space-between;
    padding: 3px 7px 0 5px;
    background: #dbdbdb;
    border: 1px solid #b4b4b4;
    letter-spacing: 0.2px;
}

.dock-icons {
    display: flex;
    align-items: center;
    gap: 14px;
    margin-top: -4px;
}

.tree-box {
    height: 1102px;
    display: flex;
    background: #fff;
    border: 1px solid #828790;
    overflow: hidden;
}

.tree {
    flex: 1;
}

.node {
    height: 43px;
    line-height: 42px;
    display: flex;
    align-items: center;
    word-spacing: 1px;
}

.node.drive {
    letter-spacing: -0.3px;
}

.l0 { padding-left: 4px; }
.l1 { padding-left: 24px; }
.l2 { padding-left: 44px; }
.l3 { padding-left: 64px; }
.l4 { padding-left: 84px; }
.l5 { padding-left: 104px; }
.l6 { padding-left: 124px; }

.ico {
    width: 40px;
    height: 40px;
    margin-right: 5px;
}

.arr {
    width: 14px;
    height: 22px;
    margin: 0 4px 0 -18px;
}

.arr.open {
    width: 16px;
    height: 16px;
    margin: -3px 2px 0 -18px;
}

.selected {
    width: 292px;
    height: 43px;
    margin-left: -3px;
    padding-left: 2px;
    display: flex;
    align-items: center;
    background: #f6f6f6;
    border: 1px solid #dcdcdc;
}

.vscroll {
    width: 42px;
    display: flex;
    flex-direction: column;
    padding-right: 1px;
    background: #f0f0f0;
}

.vbtn {
    height: 42px;
    display: flex;
    justify-content: center;
    padding-top: 11px;
}

.vbtn.end {
    height: 31px;
    padding-top: 0;
    margin-top: auto;
}

.vthumb {
    height: 428px;
    background: #cdcdcd;
    display: flex;
    align-items: center;
    justify-content: center;
}

.vthumb b,
.hthumb b {
    width: 23px;
    height: 24px;
    background: #f0f0f0;
}

/* File browser */
.browser {
    width: 2564px;
    margin-left: 11px;
    display: flex;
    flex-direction: column;
}

.address {
    height: 46px;
    flex-shrink: 0;
    display: flex;
    align-items: center;
}

.address .tool {
    width: 51.500px;
}

.address .go-up {
    width: 42px;
    margin-right: 8px;
}

.address .drop {
    width: 29px;
}

.address .drop.tight {
    width: 24px;
    margin-right: 8px;
}

.path {
    width: 550px;
    height: 40px;
    display: flex;
    align-items: center;
    justify-content: space-between;
    padding: 2px 0 0 4px;
    background: #fff;
    border: 1px solid #abadb3;
    letter-spacing: 0.600px;
}

.search {
    width: 150px;
    height: 40px;
    padding: 2px 0 0 3px;
    line-height: 38px;
    background: #fff;
    border: 1px solid #abadb3;
    color: #808080;
    overflow: hidden;
}

.slider {
    width: 200px;
    height: 4px;
    margin-left: auto;
    display: flex;
    align-items: center;
    background: #e7e7e7;
    border: 1px solid #d0d0d0;
}

.slider b {
    width: 26px;
    height: 21px;
    margin-left: 5px;
    background: linear-gradient(#f2f2f2, #e4e4e4);
    border: 1px solid #acacac;
}

.corner {
    margin: 0 17px 0 20px;
}

.list {
    flex: 1;
    display: flex;
    flex-direction: column;
    background: #fff;
    border: 1px solid #828790;
}

.list-head {
    height: 61px;
    line-height: 64px;
    padding-left: 9px;
    background: #fcfcfc;
    position: relative;
}

.sort-mark {
    position: absolute;
    left: 1272px;
    top: 4px;
}

.row {
    height: 43px;
    line-height: 43px;
    display: flex;
    align-items: center;
    padding: 2px 0 0 3px;
    background: #ecebc7;
}

.row svg {
    margin: -4px 6px 0 0;
}

.row.parent {
    background: #d0d0d0;
}

.row.parent svg {
    margin: -3px 4px 0 -1px;
}

.row.focus {
    background: #bddacf;
    border: 1px dotted #174a4a;
    padding-left: 2px;
}

.hscroll {
    height: 42px;
    margin-top: auto;
    display: flex;
    padding-bottom: 1px;
    background: #f0f0f0;
}

.hbtn {
    width: 42px;
    display: flex;
    align-items: center;
    padding-left: 11px;
}

.hbtn.end {
    width: 30px;
    padding: 0;
    margin-left: auto;
}

.hthumb {
    width: 2217px;
    background: #cdcdcd;
    display: flex;
    align-items: center;
    justify-content: center;
}

/* Lower docks */
.lower {
    height: 295px;
    flex-shrink: 0;
    display: flex;
    gap: 10px;
    padding-top: 11px;
}

.info {
    width: 626px;
}

.preview {
    flex: 1;
}

.info-box {
    width: 624px;
    height: 231px;
    margin-top: 1px;
    background: #fff;
    border: 1px solid #a0a0a0;
}

.status {
    height: 40px;
    flex-shrink: 0;
    line-height: 42px;
}

.status span {
    display: inline-block;
    width: 549px;
    height: 38px;
    padding-left: 3px;
    border-right: 1px solid #e2e2e2;
    letter-spacing: -1px;
    word-spacing: 2.200px;
}

/* Taskbar */
.taskbar {
    height: 88px;
    flex-shrink: 0;
    display: flex;
    position: relative;
    overflow: hidden;
    border-top: 1px solid #6b5433;
    background: linear-gradient(to right,
        #665233 0px, #6b4c3c 60px, #6f5541 150px, #9a8140 165px, #98804e 215px,
        #a18358 230px, #a88760 600px, #a98a5c 1100px, #9c7c45 1365px, #7f6027 1385px,
        #84612e 1415px, #9c5b4a 1445px, #9f5c4b 1600px, #7a4a30 1618px, #955640 1680px,
        #9a5b44 1850px, #8d5439 2080px, #74502f 2120px, #a6753c 2145px, #a8743c 2340px,
        #b07c48 2420px, #b58654 2600px, #a17f50 2625px, #a98554 2740px, #a58250 2845px,
        #6c7030 2860px, #5f4e28 2925px, #756f2c 2960px, #7d7f30 3060px, #7f7d2c 3200px);
}

.wallpaper-text {
    position: absolute;
    left: 78px;
    top: -50px;
    font-family: "DejaVu Sans", sans-serif;
    font-weight: bold;
    font-size: 64px;
    line-height: 75px;
    letter-spacing: 28px;
    color: rgba(226, 216, 182, 0.75);
}

.start {
    width: 90px;
    padding: 17px 0 0 18px;
    position: relative;
}

.task {
    width: 125px;
    height: 87px;
    margin-right: 3px;
    flex-shrink: 0;
    position: relative;
    display: flex;
    align-items: center;
    justify-content: center;
    padding-bottom: 2px;
    border: 1px solid rgba(235, 220, 190, 0.55);
    background: rgba(200, 175, 130, 0.2);
}

.task.plain {
    border-color: transparent;
    background: none;
}

.task.active {
    background: linear-gradient(#e8cc48, #ea9440);
    border: 2px solid #f8e8a0;
}

.task.window {
    background: linear-gradient(to right, #a59583, #b09f8a 75%, #cda1a0 85%, #c4a090);
    border: 2px solid #f2e9dc;
}

.tray {
    margin-left: auto;
    position: relative;
    width: 784px;
    display: flex;
    align-items: center;
    color: #fff;
    font-size: 29px;
}

.batt { margin-left: 24px; }
.more { margin: 4px 0 0 26px; }
.shield { margin: 2px 0 0 29px; }
.dbx { margin: 2px 0 0 20px; }
.power { margin: 2px 0 0 22px; }
.signal { margin: 2px 0 0 19px; }
.sound { margin: 2px 0 0 25px; }

.lang {
    margin: 6px 0 0 29px;
    width: 60px;
    letter-spacing: -1px;
}

.clock {
    width: 170px;
    margin: 2px 20px 0 auto;
    text-align: center;
    line-height: 41px;
    letter-spacing: -0.400px;
}
```
